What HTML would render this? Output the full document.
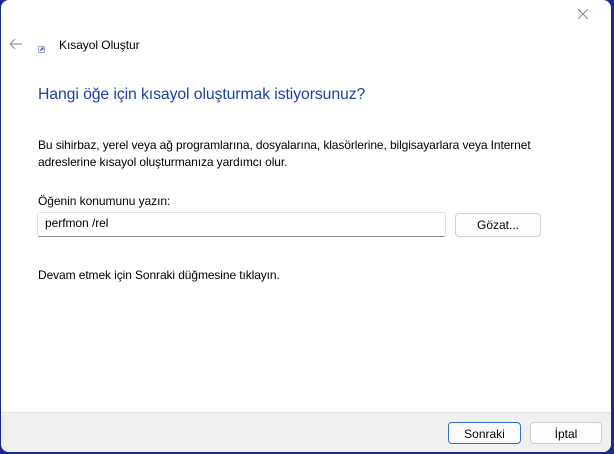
<!DOCTYPE html>
<html><head><meta charset="utf-8"><style>
html,body{margin:0;padding:0;width:614px;height:454px;overflow:hidden;background:#1a2a8a;font-family:"Segoe UI","Liberation Sans",sans-serif;}
.win{position:absolute;left:1px;top:0;width:610px;height:452px;background:#fff;border-radius:8px;overflow:hidden;}
.t{position:absolute;white-space:nowrap;color:#000;font-size:12px;letter-spacing:-0.05px;}
.foot{position:absolute;left:0;top:412px;width:100%;height:40px;background:#f0f0f0;border-top:1px solid #e3e3e3;}
.btn{position:absolute;height:22px;border:1px solid #d0d0d0;border-radius:4px;background:#fdfdfd;font-size:12px;text-align:center;line-height:22px;box-sizing:border-box;}
</style></head><body>
<div class="win">
 <svg style="position:absolute;left:8px;top:38px" width="14" height="12"><path d="M1 6H13M1 6L6 1M1 6L6 11" stroke="#9a9a9a" stroke-width="1.2" fill="none"/></svg>
 <svg style="position:absolute;left:37px;top:46px" width="7" height="7"><rect x="0.5" y="0.5" width="6" height="6" fill="#fff" stroke="#aac"/><path d="M2 5L5 2M3 2H5V4" stroke="#36c" fill="none"/></svg>
 <div class="t" style="left:58px;top:38px;font-size:12px">Kısayol Oluştur</div>
 <svg style="position:absolute;left:577px;top:9px" width="10" height="10"><path d="M0 0L10 10M10 0L0 10" stroke="#888" stroke-width="1"/></svg>
 <div class="t" style="left:37px;top:86px;font-size:15.8px;letter-spacing:-0.1px;color:#1c3fa8">Hangi öğe için kısayol oluşturmak istiyorsunuz?</div>
 <div class="t" style="left:37px;top:137px;line-height:17px;letter-spacing:-0.1px">Bu sihirbaz, yerel veya ağ programlarına, dosyalarına, klasörlerine, bilgisayarlara veya Internet<br>adreslerine kısayol oluşturmanıza yardımcı olur.</div>
 <div class="t" style="left:37px;top:194px">Öğenin konumunu yazın:</div>
 <div style="position:absolute;left:36px;top:212px;width:409px;height:25px;border:1px solid #e3e3e3;border-bottom:1px solid #888;border-radius:3px;box-sizing:border-box;"></div>
 <div class="t" style="left:44px;top:216px">perfmon /rel</div>
 <div class="btn" style="left:454px;top:213px;width:86px;height:24px;line-height:22px">Gözat...</div>
 <div class="t" style="left:37px;top:268px;letter-spacing:-0.1px">Devam etmek için Sonraki düğmesine tıklayın.</div>
 <div class="foot"></div>
 <div class="btn" style="left:447px;top:422px;width:73px;border:1px solid #2f6fd0">Sonraki</div>
 <div class="btn" style="left:529px;top:422px;width:72px">İptal</div>
</div>
</body></html>
